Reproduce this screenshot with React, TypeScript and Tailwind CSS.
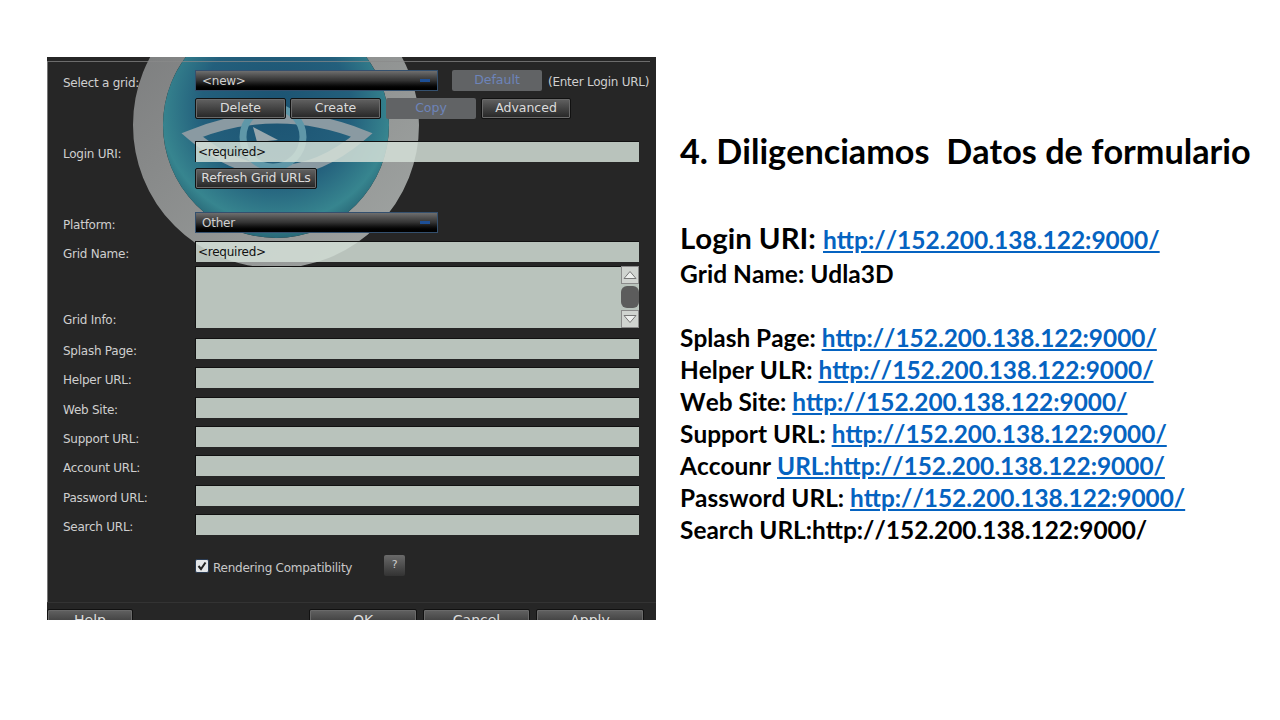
import React from "react";

const URL_TEXT = "http://152.200.138.122:9000/";

function Label({ children, className = "pt-[4px]" }: { children: React.ReactNode; className?: string }) {
  return <span className={`w-[132px] shrink-0 text-[12px] leading-[16px] tracking-[-0.25px] text-[#cfcfcf] ${className}`}>{children}</span>;
}

function ViewerButton({ children, className = "", disabled = false }: { children: React.ReactNode; className?: string; disabled?: boolean }) {
  if (disabled) {
    return (
      <div className={`h-[21px] flex items-center justify-center rounded-[2px] bg-[#616365] text-[12.5px] text-[#6d84ba] ${className}`}>
        {children}
      </div>
    );
  }
  return (
    <div className={`h-[21px] flex items-center justify-center rounded-[2px] border border-[#111] bg-gradient-to-b from-[#626262] to-[#262626] text-[12.5px] text-[#dcdcdc] shadow-[inset_0_0_0_1px_#6a6a6a] ${className}`}>
      {children}
    </div>
  );
}

function Dropdown({ text }: { text: string }) {
  return (
    <div className="w-[243px] h-[21px] flex items-center justify-between pl-[6px] pr-[7px] border border-[#34506e] bg-gradient-to-b from-[#6e6e6e] via-[#333] to-black text-[12px] tracking-[-0.25px] text-[#d0d0d0]">
      <span>{text}</span>
      <span className="w-[10px] h-[3px] bg-[#1d4f96]" />
    </div>
  );
}

function Field({ text, className = "h-[21px]" }: { text?: string; className?: string }) {
  return (
    <div className={`w-[444px] flex items-center pl-[2px] border-t border-l border-[#111] border-b-[#777] bg-[#d3dfd7]/85 text-[12px] tracking-[-0.25px] text-[#111] ${className}`}>
      {text}
    </div>
  );
}

function FormRow({ label, className = "" }: { label: string; className?: string }) {
  return (
    <div className={`flex items-center ${className}`}>
      <Label>{label}</Label>
      <Field />
    </div>
  );
}

function ScrollArrow({ up }: { up: boolean }) {
  return (
    <div className="w-[18px] h-[18px] flex items-center justify-center bg-[#d0d4d0] border border-[#8a8a8a]">
      <svg width="14" height="10" viewBox="0 0 14 10">
        <path d={up ? "M1 8.5 L7 1.5 L13 8.5 Z" : "M1 1.5 L7 8.5 L13 1.5 Z"} fill="#eef0ee" stroke="#777" strokeWidth="1" />
      </svg>
    </div>
  );
}

function GridLogo() {
  return (
    <svg className="absolute left-[86px] top-0 w-[286px] h-[215px]" viewBox="0 0 286 215">
      <defs>
        <radialGradient id="disc" cx="0.5" cy="0.42" r="0.6">
          <stop offset="0" stopColor="#1c5372" />
          <stop offset="0.55" stopColor="#235f7c" />
          <stop offset="0.85" stopColor="#37858f" />
          <stop offset="1" stopColor="#245f70" />
        </radialGradient>
        <linearGradient id="ring" x1="0" y1="0" x2="1" y2="1">
          <stop offset="0" stopColor="#7b7c7d" />
          <stop offset="1" stopColor="#a0a4a2" />
        </linearGradient>
      </defs>
      <circle cx="143" cy="68" r="128" fill="none" stroke="url(#ring)" strokeWidth="30" />
      <circle cx="143" cy="68" r="113" fill="url(#disc)" />
      <path d="M59 78 Q144 44 229 78 Q144 150 59 78 Z" fill="none" stroke="#8a9aa2" strokeWidth="11" strokeLinejoin="miter" />
      <circle cx="140" cy="80" r="30" fill="none" stroke="#5f97a8" strokeWidth="7" />
      <path d="M120 70 L145 83 L124 85 Z" fill="#9aa8ae" />
    </svg>
  );
}

function Line({ label, link, plain }: { label: string; link?: string; plain?: string }) {
  return (
    <p className="h-[32px] leading-[32px] whitespace-pre">
      {label}
      {plain}
      {link && <a className="text-[#0563c1] underline">{link}</a>}
    </p>
  );
}

export default function App() {
  return (
    <div className="w-[1280px] h-[720px] bg-white flex overflow-hidden font-['Lato',sans-serif]">
      {/* VIEWER PANEL */}
      <div className="relative ml-[47px] mt-[57px] w-[609px] h-[563px] bg-[#262626] overflow-hidden font-['DejaVu_Sans',sans-serif]">
        <GridLogo />
        <div className="absolute left-0 right-[6px] top-[4px] h-px bg-[#8a8a8a]/70" />
        <div className="absolute left-0 top-[4px] bottom-[18px] w-px bg-[#777]" />
        <div className="absolute left-0 right-0 top-[545px] h-px bg-[#333]" />
        <div className="relative pl-[16px] pt-[13px]">
          <div className="flex items-center">
            <Label>Select a grid:</Label>
            <Dropdown text="<new>" />
            <ViewerButton disabled className="ml-[14px] w-[90px]">Default</ViewerButton>
            <span className="ml-[6px] pt-[3px] text-[12px] leading-[16px] tracking-[-0.25px] text-[#cfcfcf] whitespace-nowrap">(Enter Login URL)</span>
          </div>

          <div className="flex mt-[7px] ml-[132px]">
            <ViewerButton className="w-[91px]">Delete</ViewerButton>
            <ViewerButton className="w-[91px] ml-[4px]">Create</ViewerButton>
            <ViewerButton disabled className="w-[90px] ml-[5px]">Copy</ViewerButton>
            <ViewerButton className="w-[90px] ml-[5px]">Advanced</ViewerButton>
          </div>

          <div className="flex items-center mt-[22px]">
            <Label>Login URI:</Label>
            <Field text="<required>" />
          </div>
          <ViewerButton className="ml-[132px] mt-[6px] w-[122px] tracking-[-0.2px]">Refresh Grid URLs</ViewerButton>

          <div className="flex items-center mt-[23px]">
            <Label>Platform:</Label>
            <Dropdown text="Other" />
          </div>
          <div className="flex items-center mt-[8px]">
            <Label>Grid Name:</Label>
            <Field text="<required>" />
          </div>

          <div className="flex items-end mt-[4px]">
            <Label className="pb-0">Grid Info:</Label>
            <div className="relative">
              <Field className="h-[62px]" />
              <div className="absolute right-0 top-0 h-full w-[18px] flex flex-col justify-between">
                <ScrollArrow up />
                <div className="h-[22px] rounded-[6px] bg-[#5c5c5c]" />
                <ScrollArrow up={false} />
              </div>
            </div>
          </div>

          <FormRow label="Splash Page:" className="mt-[10px]" />
          <FormRow label="Helper URL:" className="mt-[8px]" />
          <FormRow label="Web Site:" className="mt-[9px]" />
          <FormRow label="Support URL:" className="mt-[8px]" />
          <FormRow label="Account URL:" className="mt-[8px]" />
          <FormRow label="Password URL:" className="mt-[9px]" />
          <FormRow label="Search URL:" className="mt-[8px]" />

          <div className="flex items-center mt-[20px] ml-[132px]">
            <div className="w-[14px] h-[14px] flex items-center justify-center rounded-[2px] bg-[#e4e6e8] border border-[#2a3b52]">
              <svg width="10" height="10" viewBox="0 0 10 10">
                <path d="M1.5 5 L4 8 L8.5 1.5" fill="none" stroke="#222" strokeWidth="2" />
              </svg>
            </div>
            <span className="ml-[4px] pt-[5px] text-[12px] leading-[16px] tracking-[-0.25px] text-[#c8c8c8]">Rendering Compatibility</span>
            <div className="ml-[32px] w-[21px] h-[21px] flex items-center justify-center rounded-[2px] bg-gradient-to-b from-[#6a6a6a] to-[#333] text-[11px] text-[#ccc]">?</div>
          </div>

          <div className="flex mt-[33px] -ml-[16px] pr-[12px]">
            <ViewerButton className="w-[86px] !h-[24px] !items-start !text-[14px]">Help</ViewerButton>
            <ViewerButton className="w-[108px] !h-[24px] !items-start !text-[14px] ml-auto">OK</ViewerButton>
            <ViewerButton className="w-[107px] !h-[24px] !items-start !text-[14px] ml-[6px]">Cancel</ViewerButton>
            <ViewerButton className="w-[108px] !h-[24px] !items-start !text-[14px] ml-[6px]">Apply</ViewerButton>
          </div>
        </div>
      </div>

      {/* SLIDE TEXT */}
      <div className="ml-[24px] pt-[129px] font-bold text-black [font-kerning:none]">
        <h1 className="text-[34.2px] leading-[44px] whitespace-pre">4. Diligenciamos  Datos de formulario</h1>
        <p className="mt-[44px] text-[29.4px] leading-[42px] whitespace-pre">
          Login URI: <a className="text-[24.5px] text-[#0563c1] underline">{URL_TEXT}</a>
        </p>
        <p className="text-[24.5px] leading-[26px]">Grid Name: Udla3D</p>
        <div className="mt-[35px] text-[24.4px]">
          <Line label="Splash Page: " link={URL_TEXT} />
          <Line label="Helper ULR: " link={URL_TEXT} />
          <Line label="Web Site: " link={URL_TEXT} />
          <Line label="Support URL: " link={URL_TEXT} />
          <Line label="Accounr " link={"URL:" + URL_TEXT} />
          <Line label="Password URL: " link={URL_TEXT} />
          <Line label="Search URL:" plain={URL_TEXT} />
        </div>
      </div>
    </div>
  );
}
